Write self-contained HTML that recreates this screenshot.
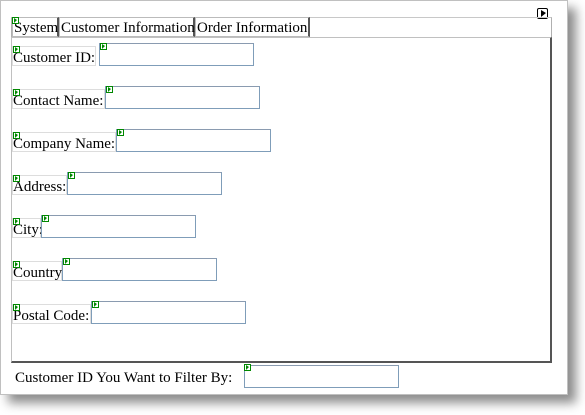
<!DOCTYPE html>
<html><head><style>
body{margin:0;width:585px;height:415px;background:#fff;position:relative;overflow:hidden;font-family:"Liberation Serif",serif;font-size:15px;color:#000}
.win{position:absolute;left:0;top:0;width:566px;height:393px;border:1px solid #c0c0c0;background:#fff;box-shadow:8px 8px 10px rgba(0,0,0,.45)}
.a{position:absolute}
.strip{left:11px;top:17px;width:539px;height:19px;border:1px solid #b0b0b0;border-top-color:#c8c8c8}
.tab{position:absolute;top:17px;height:20px;line-height:21px;border:1px solid #bbb;border-right:2px solid #555;background:#fff;white-space:nowrap;padding-left:1px;box-sizing:border-box}
.panel{left:11px;top:37px;width:538px;height:323px;border:1px solid #c0c0c0;border-right:2px solid #555;border-bottom:2px solid #555}
.lbl{position:absolute;height:20px;line-height:22px;border:1px solid #ddd;white-space:nowrap;box-sizing:border-box}
.inp{position:absolute;width:155px;height:23px;border:1px solid #7f9db9;border-top-color:#8a9bb0;box-sizing:border-box;background:#fff}
.m{position:absolute;width:5px;height:5px;border:1px solid #080;background:#fff;z-index:2}
.m:after{content:"";position:absolute;left:1px;top:0;border-left:3px solid #080;border-top:2px solid transparent;border-bottom:3px solid transparent}
.arrow{left:537px;top:8px;width:9px;height:9px;border:1px solid #000;border-radius:2px}
.arrow:after{content:"";position:absolute;left:3px;top:1px;border-left:5px solid #000;border-top:3px solid transparent;border-bottom:4px solid transparent}
</style></head><body>
<div class="win"></div>
<div class="a arrow"></div>
<div class="a strip"></div>
<div class="tab" style="left:12px;width:47px">System</div>
<div class="tab" style="left:59px;width:136px">Customer Information</div>
<div class="tab" style="left:195px;width:115px">Order Information</div>
<div class="m" style="left:12px;top:17px"></div>
<div class="a panel"></div>

<div class="lbl" style="left:12px;top:46px;width:84px">Customer ID:</div><div class="m" style="left:13px;top:46px"></div>
<div class="inp" style="left:99px;top:43px"></div><div class="m" style="left:100px;top:43px"></div>

<div class="lbl" style="left:12px;top:89px;width:93px">Contact Name:</div><div class="m" style="left:13px;top:89px"></div>
<div class="inp" style="left:105px;top:86px"></div><div class="m" style="left:106px;top:86px"></div>

<div class="lbl" style="left:12px;top:132px;width:104px">Company Name:</div><div class="m" style="left:13px;top:132px"></div>
<div class="inp" style="left:116px;top:129px"></div><div class="m" style="left:117px;top:129px"></div>

<div class="lbl" style="left:12px;top:175px;width:55px">Address:</div><div class="m" style="left:13px;top:175px"></div>
<div class="inp" style="left:67px;top:172px"></div><div class="m" style="left:68px;top:172px"></div>

<div class="lbl" style="left:12px;top:218px;width:29px">City:</div><div class="m" style="left:13px;top:218px"></div>
<div class="inp" style="left:41px;top:215px"></div><div class="m" style="left:42px;top:215px"></div>

<div class="lbl" style="left:12px;top:261px;width:50px">Country</div><div class="m" style="left:13px;top:261px"></div>
<div class="inp" style="left:62px;top:258px"></div><div class="m" style="left:63px;top:258px"></div>

<div class="lbl" style="left:12px;top:304px;width:79px">Postal Code:</div><div class="m" style="left:13px;top:304px"></div>
<div class="inp" style="left:91px;top:301px"></div><div class="m" style="left:92px;top:301px"></div>

<div class="a" style="left:15px;top:369px;white-space:nowrap;line-height:18px">Customer ID You Want to Filter By:</div>
<div class="inp" style="left:244px;top:365px"></div><div class="m" style="left:244px;top:364px"></div>
</body></html>
